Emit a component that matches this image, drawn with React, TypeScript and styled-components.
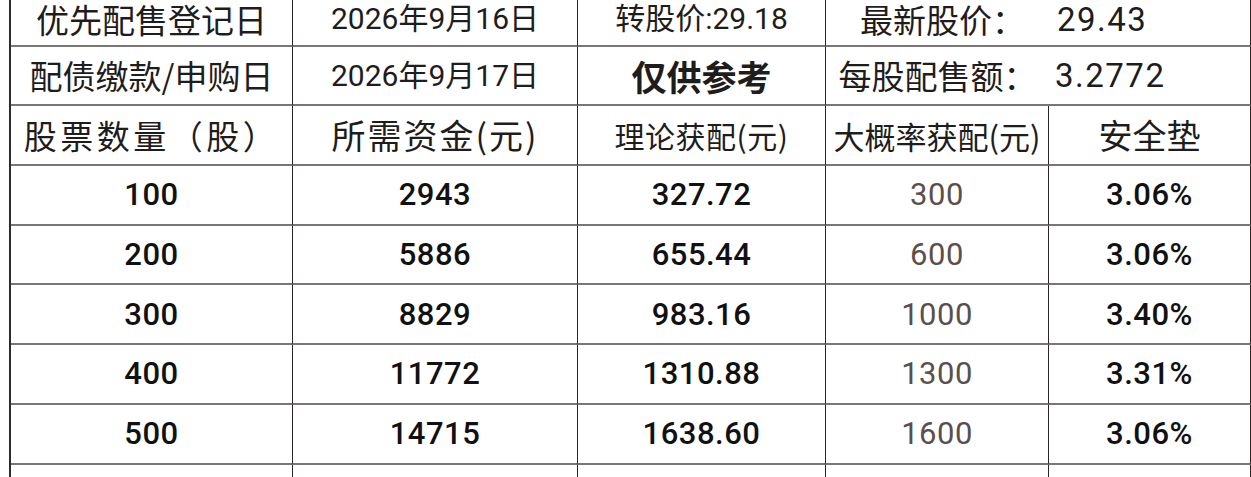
import React from "react";
import styled, { createGlobalStyle } from "styled-components";

const Global = createGlobalStyle`
  html, body { margin: 0; padding: 0; background: #fff; overflow: hidden; }
  body { font-family: "Noto Sans CJK SC", "Noto Sans", sans-serif; color: #1c1a1a; }
`;

const Page = styled.div`
  width: 1251px;
  height: 477px;
  overflow: hidden;
  background: #fff;
`;

const Table = styled.div`
  margin-left: 9px;
  border-left: 2px solid #2e2b2b;
  display: grid;
  grid-template-columns: 282px 285px 248px 223px 1fr;
  grid-template-rows: 46.7px;
  grid-auto-rows: 59.7px;
`;

const Cell = styled.div<{ $top?: boolean; $noRight?: boolean; $align?: "left" | "center"; $pad?: number }>`
  box-sizing: border-box;
  border-right: ${(p) => (p.$noRight ? "none" : "1.5px solid #2a2626")};
  border-bottom: 2.5px solid #7a7676;
  display: flex;
  align-items: center;
  justify-content: ${(p) => (p.$align === "left" ? "flex-start" : "center")};
  padding-left: ${(p) => p.$pad ?? 0}px;
  padding-bottom: ${(p) => (p.$top ? 6 : 0)}px;
  white-space: nowrap;
`;

const Label = styled.span<{ $size?: number; $bold?: boolean; $ls?: number }>`
  font-family: "Noto Sans CJK SC", sans-serif;
  font-size: ${(p) => p.$size ?? 33}px;
  font-weight: ${(p) => (p.$bold ? 700 : 400)};
  letter-spacing: ${(p) => p.$ls ?? 0}px;
  color: #1f1c1c;
  line-height: 1;
`;

const Value = styled.span<{ $size?: number; $ls?: number }>`
  font-family: Roboto, "Noto Sans CJK SC", sans-serif;
  font-size: ${(p) => p.$size ?? 30}px;
  font-weight: 400;
  letter-spacing: ${(p) => p.$ls ?? 0}px;
  color: #1f1c1c;
  line-height: 1;
`;

const Num = styled.span<{ $tone?: "dark" | "muted"; $weight?: number }>`
  font-family: Roboto, "Noto Sans", sans-serif;
  font-size: 31px;
  font-weight: ${(p) => p.$weight ?? 500};
  letter-spacing: 0.5px;
  color: ${(p) => (p.$tone === "muted" ? "#5a4f4c" : "#111")};
  line-height: 1;
`;

const rows = [
  ["100", "2943", "327.72", "300", "3.06%"],
  ["200", "5886", "655.44", "600", "3.06%"],
  ["300", "8829", "983.16", "1000", "3.40%"],
  ["400", "11772", "1310.88", "1300", "3.31%"],
  ["500", "14715", "1638.60", "1600", "3.06%"],
];

export default function App() {
  return (
    <Page>
      <Global />
      <Table>
        <Cell $top><Label>优先配售登记日</Label></Cell>
        <Cell $top><Value>2026年9月16日</Value></Cell>
        <Cell $top><Value $size={30}>转股价:29.18</Value></Cell>
        <Cell $top $noRight $pad={10}><Label $size={33}>最新股价：</Label></Cell>
        <Cell $top $align="left" $pad={8}><Value $size={33} $ls={1.5}>29.43</Value></Cell>

        <Cell><Label>配债缴款/申购日</Label></Cell>
        <Cell><Value>2026年9月17日</Value></Cell>
        <Cell><Label $size={35} $bold>仅供参考</Label></Cell>
        <Cell $noRight><Label $size={33}>每股配售额：</Label></Cell>
        <Cell $align="left" $pad={6}><Value $size={33} $ls={1.5}>3.2772</Value></Cell>

        <Cell><Label $ls={3.5}>股票数量（股）</Label></Cell>
        <Cell><Label $size={34} $ls={2}>所需资金(元)</Label></Cell>
        <Cell><Label $size={30} $ls={0.5}>理论获配(元)</Label></Cell>
        <Cell><Label $size={31}>大概率获配(元)</Label></Cell>
        <Cell><Label $size={34}>安全垫</Label></Cell>

        {rows.map((r) => (
          <React.Fragment key={r[0]}>
            <Cell><Num>{r[0]}</Num></Cell>
            <Cell><Num>{r[1]}</Num></Cell>
            <Cell><Num>{r[2]}</Num></Cell>
            <Cell><Num $tone="muted" $weight={400}>{r[3]}</Num></Cell>
            <Cell><Num>{r[4]}</Num></Cell>
          </React.Fragment>
        ))}

        <Cell />
        <Cell />
        <Cell />
        <Cell />
        <Cell />
      </Table>
    </Page>
  );
}
